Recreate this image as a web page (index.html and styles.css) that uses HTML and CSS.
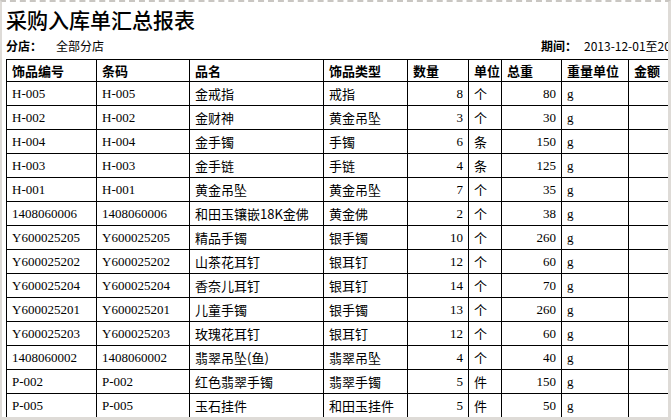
FILE: index.html
```html
<!DOCTYPE html>
<html lang="zh">
<head>
<meta charset="utf-8">
<title>采购入库单汇总报表</title>
<link rel="stylesheet" href="styles.css">
</head>
<body>
<div class="frame">
  <div class="page">
    <h1 class="title">采购入库单汇总报表</h1>
    <div class="meta">
      <div class="meta-item branch"><span class="label">分店：</span><span class="value">全部分店</span></div>
      <div class="meta-item period"><span class="label">期间：</span><span class="value date">2013-12-01至2013-12-31</span></div>
    </div>
    <table class="report">
      <colgroup>
        <col class="c1"><col class="c2"><col class="c3"><col class="c4"><col class="c5"><col class="c6"><col class="c7"><col class="c8"><col class="c9">
      </colgroup>
      <thead>
        <tr><th>饰品编号</th><th>条码</th><th>品名</th><th>饰品类型</th><th>数量</th><th>单位</th><th>总重</th><th>重量单位</th><th>金额</th></tr>
      </thead>
      <tbody>
        <tr><td>H-005</td><td>H-005</td><td class="cn">金戒指</td><td class="cn">戒指</td><td class="num">8</td><td class="cn">个</td><td class="num">80</td><td>g</td><td></td></tr>
        <tr><td>H-002</td><td>H-002</td><td class="cn">金财神</td><td class="cn">黄金吊坠</td><td class="num">3</td><td class="cn">个</td><td class="num">30</td><td>g</td><td></td></tr>
        <tr><td>H-004</td><td>H-004</td><td class="cn">金手镯</td><td class="cn">手镯</td><td class="num">6</td><td class="cn">条</td><td class="num">150</td><td>g</td><td></td></tr>
        <tr><td>H-003</td><td>H-003</td><td class="cn">金手链</td><td class="cn">手链</td><td class="num">4</td><td class="cn">条</td><td class="num">125</td><td>g</td><td></td></tr>
        <tr><td>H-001</td><td>H-001</td><td class="cn">黄金吊坠</td><td class="cn">黄金吊坠</td><td class="num">7</td><td class="cn">个</td><td class="num">35</td><td>g</td><td></td></tr>
        <tr><td>1408060006</td><td>1408060006</td><td class="cn">和田玉镶嵌18K金佛</td><td class="cn">黄金佛</td><td class="num">2</td><td class="cn">个</td><td class="num">38</td><td>g</td><td></td></tr>
        <tr><td>Y600025205</td><td>Y600025205</td><td class="cn">精品手镯</td><td class="cn">银手镯</td><td class="num">10</td><td class="cn">个</td><td class="num">260</td><td>g</td><td></td></tr>
        <tr><td>Y600025202</td><td>Y600025202</td><td class="cn">山茶花耳钉</td><td class="cn">银耳钉</td><td class="num">12</td><td class="cn">个</td><td class="num">60</td><td>g</td><td></td></tr>
        <tr><td>Y600025204</td><td>Y600025204</td><td class="cn">香奈儿耳钉</td><td class="cn">银耳钉</td><td class="num">14</td><td class="cn">个</td><td class="num">70</td><td>g</td><td></td></tr>
        <tr><td>Y600025201</td><td>Y600025201</td><td class="cn">儿童手镯</td><td class="cn">银手镯</td><td class="num">13</td><td class="cn">个</td><td class="num">260</td><td>g</td><td></td></tr>
        <tr><td>Y600025203</td><td>Y600025203</td><td class="cn">玫瑰花耳钉</td><td class="cn">银耳钉</td><td class="num">12</td><td class="cn">个</td><td class="num">60</td><td>g</td><td></td></tr>
        <tr><td>1408060002</td><td>1408060002</td><td class="cn">翡翠吊坠(鱼)</td><td class="cn">翡翠吊坠</td><td class="num">4</td><td class="cn">个</td><td class="num">40</td><td>g</td><td></td></tr>
        <tr><td>P-002</td><td>P-002</td><td class="cn">红色翡翠手镯</td><td class="cn">翡翠手镯</td><td class="num">5</td><td class="cn">件</td><td class="num">150</td><td>g</td><td></td></tr>
        <tr><td>P-005</td><td>P-005</td><td class="cn">玉石挂件</td><td class="cn">和田玉挂件</td><td class="num">5</td><td class="cn">件</td><td class="num">50</td><td>g</td><td></td></tr>
      </tbody>
    </table>
  </div>
</div>
</body>
</html>
```

FILE: styles.css
```css
html, body {
  margin: 0;
  padding: 0;
  background: #ffffff;
}

.frame {
  width: 671px;
  height: 420px;
  box-sizing: border-box;
  border-top: 2px dashed #c9c6c2;
  border-left: 2px solid #dedbd7;
  border-right: 3px solid #dedbd7;
  border-bottom: 3px solid #dedbd7;
  overflow: hidden;
  background: #fff;
}

.page {
  padding: 4px 0 0 4px;
  width: 720px;
  color: #000;
  font-family: "Liberation Serif", "Noto Sans CJK SC", serif;
}

.title {
  margin: 0;
  font-family: "Noto Sans CJK SC", sans-serif;
  font-size: 21px;
  font-weight: 500;
  line-height: 26px;
}

.meta {
  display: flex;
  height: 27px;
  align-items: center;
  font-family: "Noto Sans CJK SC", sans-serif;
  font-size: 12px;
}

.meta-item {
  display: flex;
  align-items: center;
  white-space: nowrap;
}

.branch {
  width: 535px;
  flex: none;
}

.label {
  font-weight: 700;
  width: 50px;
}

.period .label {
  width: 43px;
}

.value {
  font-weight: 400;
}

.report {
  border-collapse: collapse;
  table-layout: fixed;
  width: 683px;
}

.c1 { width: 90px; }
.c2 { width: 93px; }
.c3 { width: 134px; }
.c4 { width: 84px; }
.c5 { width: 61px; }
.c6 { width: 33px; }
.c7 { width: 60px; }
.c8 { width: 67px; }
.c9 { width: 61px; }

.report th,
.report td {
  border: 1px solid #000;
  padding: 0 5px;
  white-space: nowrap;
  overflow: hidden;
}

.report th {
  height: 21px;
  text-align: left;
  font-family: "Noto Sans CJK SC", sans-serif;
  font-size: 13px;
  font-weight: 700;
  line-height: 16px;
}

.report td {
  height: 23px;
  font-size: 13px;
  line-height: 16px;
}

.report td.cn {
  font-family: "Noto Sans CJK SC", sans-serif;
}

.report td.num {
  text-align: right;
}
```
